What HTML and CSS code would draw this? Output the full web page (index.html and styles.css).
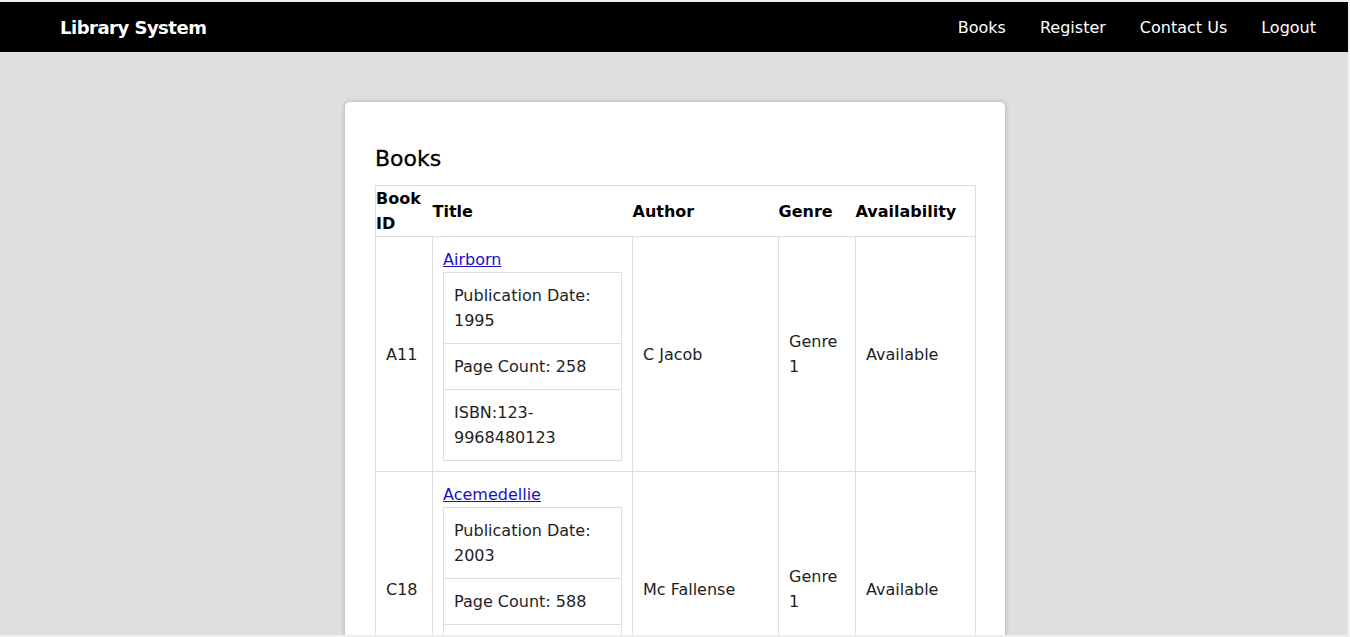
FILE: index.html
```html
<!DOCTYPE html>
<html lang="en">
<head>
<meta charset="utf-8">
<title>Library System</title>
<link rel="stylesheet" href="styles.css">
</head>
<body>
<div class="window">
  <header class="navbar">
    <div class="brand">Library System</div>
    <nav class="nav-links">
      <a href="#">Books</a>
      <a href="#">Register</a>
      <a href="#">Contact Us</a>
      <a href="#">Logout</a>
    </nav>
  </header>
  <main class="main">
    <section class="card">
      <h2 class="card-title">Books</h2>
      <table class="books">
        <colgroup>
          <col class="c-id"><col class="c-title"><col class="c-author"><col class="c-genre"><col class="c-avail">
        </colgroup>
        <thead>
          <tr><th>Book ID</th><th>Title</th><th>Author</th><th>Genre</th><th>Availability</th></tr>
        </thead>
        <tbody>
          <tr>
            <td>A11</td>
            <td>
              <a class="book-link" href="#">Airborn</a>
              <table class="details">
                <tr><td>Publication Date: 1995</td></tr>
                <tr><td>Page Count: 258</td></tr>
                <tr><td>ISBN:123-9968480123</td></tr>
              </table>
            </td>
            <td>C Jacob</td>
            <td>Genre 1</td>
            <td>Available</td>
          </tr>
          <tr>
            <td>C18</td>
            <td>
              <a class="book-link" href="#">Acemedellie</a>
              <table class="details">
                <tr><td>Publication Date: 2003</td></tr>
                <tr><td>Page Count: 588</td></tr>
                <tr><td>ISBN:123-4486120588</td></tr>
              </table>
            </td>
            <td>Mc Fallense</td>
            <td>Genre 1</td>
            <td>Available</td>
          </tr>
        </tbody>
      </table>
    </section>
  </main>
</div>
</body>
</html>
```
FILE: styles.css
```css
html, body {
  margin: 0;
  padding: 0;
}
body {
  font-family: "DejaVu Sans", "Liberation Sans", sans-serif;
  color: #1e1e1e;
  background: #dfdfdf;
}
.window {
  position: relative;
  width: 1350px;
  height: 637px;
  box-sizing: border-box;
  border-top: 2px solid #efefef;
  border-bottom: 2px solid #efefef;
  overflow: hidden;
  background: #dfdfdf;
}
.window::after {
  content: "";
  position: absolute;
  top: 0;
  right: 0;
  bottom: 0;
  width: 2px;
  background: #f4f4f4;
}
.navbar {
  height: 50px;
  background: #000;
  color: #fff;
  display: flex;
  align-items: center;
  justify-content: space-between;
  padding: 0 34px 0 60px;
}
.brand {
  font-weight: bold;
  font-size: 18px;
  letter-spacing: -0.5px;
}
.nav-links {
  display: flex;
  gap: 34px;
}
.nav-links a {
  color: #fff;
  text-decoration: none;
  font-size: 16px;
}
.main {
  padding-top: 50px;
  display: flex;
  justify-content: center;
}
.card {
  width: 660px;
  box-sizing: border-box;
  background: #fff;
  border-radius: 5px;
  box-shadow: 0 0 5px rgba(0, 0, 0, 0.25);
  padding: 30px;
}
.card-title {
  font-size: 22px;
  font-weight: normal;
  line-height: 33px;
  margin: 10px 0;
  color: #000;
  -webkit-text-stroke: 0.3px #000;
}
.books {
  width: 600px;
  table-layout: fixed;
  border-collapse: collapse;
  border: 1px solid #dedede;
  font-size: 16px;
  line-height: 25px;
}
.c-id { width: 57px; }
.c-title { width: 200px; }
.c-author { width: 146px; }
.c-genre { width: 77px; }
.c-avail { width: 120px; }
.books th {
  text-align: left;
  font-weight: bold;
  padding: 0;
  color: #000;
  vertical-align: middle;
  border-bottom: 1px solid #dedede;
}
.books td {
  padding: 10px;
  border: 1px solid #dedede;
  vertical-align: middle;
}
.book-link {
  display: block;
  color: #1a0dcc;
  text-decoration: underline;
}
.details {
  width: 100%;
  border-collapse: collapse;
}
.books .details td {
  border: 1px solid #dedede;
  padding: 10px;
}
```
